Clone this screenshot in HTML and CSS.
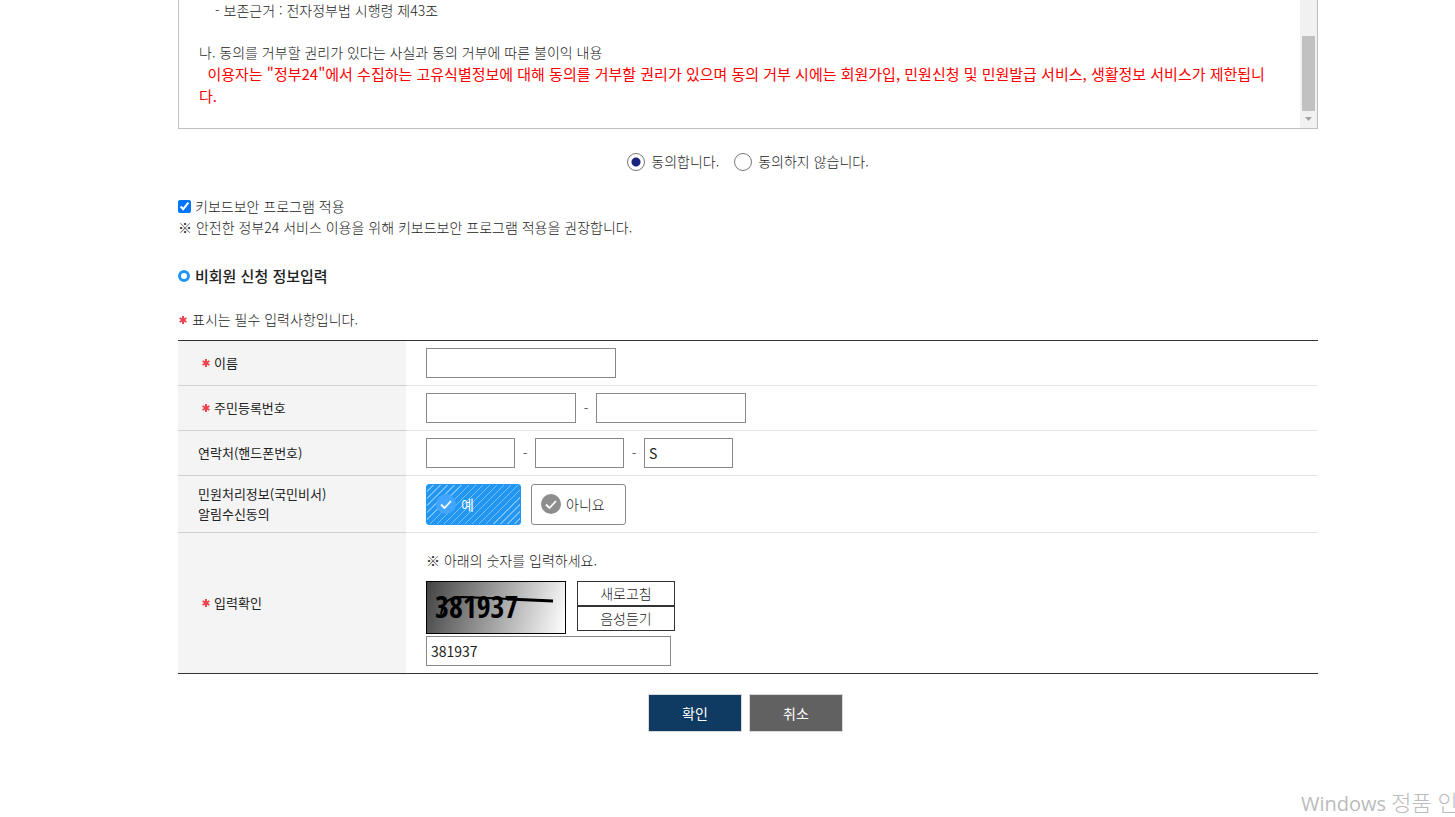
FILE: index.html
```html
<!DOCTYPE html>
<html lang="ko">
<head>
    <meta charset="UTF-8">
    <meta name="viewport" content="width=device-width, initial-scale=1.0">
    <title>비회원 신청</title>
    <link rel="stylesheet" href="styles.css">
</head>
<body>
    <svg class="defs" aria-hidden="true">
        <symbol id="star" viewBox="0 0 8 8">
            <path d="M4 0v8M.6 2l6.8 4M7.4 2L.6 6" stroke="#ee434c" stroke-width="2"/>
        </symbol>
        <symbol id="check" viewBox="0 0 20 20">
            <circle cx="10" cy="10" r="10" fill="currentColor"/>
            <path d="M5 10.500l3.500 3.500 6.500-7" fill="none" stroke="#fff" stroke-width="1.800"/>
        </symbol>
    </svg>

    <main class="container">
        <div class="terms">
            <div class="terms-text">
                <p class="indent">- 보존근거 : 전자정부법 시행령 제43조</p>
                <br>
                <p>나. 동의를 거부할 권리가 있다는 사실과 동의 거부에 따른 불이익 내용</p>
                <p class="warning">&nbsp; 이용자는 "정부24"에서 수집하는 고유식별정보에 대해 동의를 거부할 권리가 있으며 동의 거부 시에는 회원가입, 민원신청 및 민원발급 서비스, 생활정보 서비스가 제한됩니다.</p>
            </div>
            <div class="scrollbar" aria-hidden="true">
                <div class="thumb"></div>
                <svg class="arrow" viewBox="0 0 7 4"><path d="M0 0h7L3.500 4z" fill="#a3a3a3"/></svg>
            </div>
        </div>

        <div class="agree">
            <label><input type="radio" name="agree" checked>동의합니다.</label>
            <label><input type="radio" name="agree">동의하지 않습니다.</label>
        </div>

        <div class="security">
            <label><input type="checkbox" checked>키보드보안 프로그램 적용</label>
            <p>※ 안전한 정부24 서비스 이용을 위해 키보드보안 프로그램 적용을 권장합니다.</p>
        </div>

        <h2>비회원 신청 정보입력</h2>
        <p class="required"><svg class="star"><use href="#star"/></svg>표시는 필수 입력사항입니다.</p>

        <form>
            <table class="form-table">
                <tr>
                    <th scope="row"><label class="must" for="name"><svg class="star"><use href="#star"/></svg>이름</label></th>
                    <td><input class="text w-name" type="text" id="name"></td>
                </tr>
                <tr>
                    <th scope="row"><label class="must" for="jumin"><svg class="star"><use href="#star"/></svg>주민등록번호</label></th>
                    <td>
                        <div class="fields">
                            <input class="text w-jumin" type="text" id="jumin">
                            <span>-</span>
                            <input class="text w-jumin" type="password" aria-label="주민등록번호 뒷자리">
                        </div>
                    </td>
                </tr>
                <tr>
                    <th scope="row"><label for="phone">연락처(핸드폰번호)</label></th>
                    <td>
                        <div class="fields">
                            <input class="text w-phone" type="text" id="phone">
                            <span>-</span>
                            <input class="text w-phone" type="text" aria-label="핸드폰번호 가운데자리">
                            <span>-</span>
                            <input class="text w-phone" type="text" value="S" aria-label="핸드폰번호 끝자리">
                        </div>
                    </td>
                </tr>
                <tr class="tall">
                    <th scope="row">민원처리정보(국민비서)<br>알림수신동의</th>
                    <td>
                        <div class="choices">
                            <button type="button" class="choice on"><svg><use href="#check"/></svg>예</button>
                            <button type="button" class="choice"><svg><use href="#check"/></svg>아니요</button>
                        </div>
                    </td>
                </tr>
                <tr class="confirm">
                    <th scope="row"><label class="must" for="captcha"><svg class="star"><use href="#star"/></svg>입력확인</label></th>
                    <td>
                        <p>※ 아래의 숫자를 입력하세요.</p>
                        <div class="captcha">
                            <svg class="captcha-image" viewBox="0 0 138 51">
                                <text x="8" y="36">381937</text>
                                <path d="M14 32C16 20 22 15 36 15L85 17" fill="none" stroke="#000" stroke-width="2"/>
                                <path d="M80 17L126 19" stroke="#000" stroke-width="3"/>
                            </svg>
                            <div class="captcha-buttons">
                                <button type="button">새로고침</button>
                                <button type="button">음성듣기</button>
                            </div>
                        </div>
                        <input class="text w-captcha" type="text" id="captcha" value="381937">
                    </td>
                </tr>
            </table>

            <div class="buttons">
                <button type="submit" class="ok">확인</button>
                <button type="button" class="cancel">취소</button>
            </div>
        </form>
    </main>

    <div class="watermark">Windows <span>정품 인</span></div>
</body>
</html>
```
FILE: styles.css
```css
* {
    box-sizing: border-box;
}

body {
    margin: 0;
    padding-left: 41px;
    background-color: #fff;
    color: #222;
    font-family: "Noto Sans CJK KR", sans-serif;
    font-size: 14px;
    font-weight: 300;
    line-height: 21px;
    overflow: hidden;
}

p {
    margin: 0;
}

button,
input {
    font-family: inherit;
    color: inherit;
}

.defs {
    position: absolute;
    width: 0;
    height: 0;
}

.container {
    max-width: 1140px;
    margin: 0 auto;
}

/* 약관 */
.terms {
    display: flex;
    border: 1px solid #bfbfbf;
    border-top: 0;
}

.terms-text {
    flex: 1;
    padding: 0 20px 21px;
}

.indent {
    padding-left: 16px;
}

.warning {
    color: #f00;
    font-size: 15px;
    font-weight: 400;
    line-height: 22px;
    word-break: break-all;
}

.scrollbar {
    display: flex;
    flex-direction: column;
    justify-content: flex-end;
    align-items: center;
    width: 17px;
    background-color: #f1f1f1;
}

.thumb {
    width: 13px;
    height: 75px;
    background-color: #c1c1c1;
}

.arrow {
    width: 7px;
    height: 4px;
    margin: 6px 0 7px;
}

/* 동의 */
.agree {
    display: flex;
    justify-content: center;
    gap: 15px;
    margin-top: 22px;
}

.agree label {
    display: flex;
    align-items: center;
    gap: 6px;
}

.agree input {
    appearance: none;
    width: 18px;
    height: 18px;
    margin: 0;
    border: 1px solid #777;
    border-radius: 50%;
}

.agree input:checked {
    background: radial-gradient(circle, #1a237e 4px, #fff 5px);
}

.security {
    margin-top: 24px;
}

.security label {
    display: flex;
    align-items: center;
    gap: 4px;
}

.security input {
    width: 13px;
    height: 13px;
    margin: 0;
}

h2 {
    display: flex;
    align-items: center;
    gap: 5px;
    margin: 27px 0 23px;
    font-size: 15px;
    font-weight: 500;
    line-height: 21px;
}

h2::before {
    content: "";
    width: 6px;
    height: 6px;
    border: 3px solid #2196f3;
    border-radius: 50%;
}

.star {
    flex: none;
    width: 8px;
    height: 8px;
}

.required {
    display: flex;
    align-items: center;
    gap: 5px;
    padding-left: 1px;
    margin-bottom: 10px;
}

/* 입력 표 */
.form-table {
    width: 100%;
    border-collapse: collapse;
    border-top: 1px solid #333;
    border-bottom: 1px solid #333;
}

.form-table tr {
    height: 45px;
}

.form-table .tall {
    height: 57px;
}

.form-table .confirm {
    height: 141px;
}

.form-table th {
    width: 20%;
    padding: 0 20px;
    border-bottom: 1px solid #d0d0d0;
    background-color: #f4f4f4;
    font-size: 13px;
    font-weight: 400;
    line-height: 20px;
    text-align: left;
}

.form-table td {
    padding: 7px 20px;
    border-bottom: 1px solid #e5e5e5;
}

.form-table .confirm td {
    vertical-align: bottom;
}

.form-table tr:last-child > * {
    border-bottom: 1px solid #333;
}

.must {
    display: flex;
    align-items: center;
    gap: 4px;
    padding-left: 4px;
}

.text {
    display: block;
    height: 30px;
    padding: 0 4px;
    border: 1px solid #888;
    background-color: #fff;
    font-size: 14px;
    font-weight: 400;
}

.w-name {
    width: 190px;
}

.w-jumin {
    width: 150px;
}

.w-phone {
    width: 89px;
}

.w-captcha {
    width: 245px;
}

.fields {
    display: flex;
    align-items: center;
}

.fields span {
    width: 20px;
    text-align: center;
}

.choices {
    display: flex;
    gap: 10px;
}

.choice {
    display: flex;
    align-items: center;
    gap: 5px;
    width: 95px;
    height: 41px;
    padding: 0 9px;
    border: 1px solid #888;
    border-radius: 3px;
    background-color: #fff;
    font-size: 14px;
    font-weight: 300;
}

.choice svg {
    width: 20px;
    height: 20px;
    color: #8e8e8e;
}

.choice.on {
    border-color: #2196f3;
    background: repeating-linear-gradient(135deg, #2196f3 0 4px, #79bff8 4px 5px);
    color: #fff;
    font-weight: 400;
}

.choice.on svg {
    color: #42a5ff;
}

.captcha {
    display: flex;
    gap: 11px;
    margin: 10px 0 2px;
}

.captcha-image {
    width: 140px;
    height: 53px;
    border: 1px solid #000;
    background: linear-gradient(105deg, #444, #fff);
    font-family: "Liberation Sans Narrow", "Open Sans Condensed", "DejaVu Sans Condensed", sans-serif;
    font-size: 30px;
    font-weight: 700;
}

.captcha-buttons {
    display: flex;
    flex-direction: column;
}

.captcha-buttons button {
    width: 98px;
    height: 25px;
    padding: 0;
    border: 1px solid #333;
    background-color: #fff;
    font-size: 14px;
    font-weight: 300;
    line-height: 21px;
}

.buttons {
    display: flex;
    justify-content: center;
    gap: 7px;
    margin-top: 20px;
    padding-right: 5px;
}

.buttons button {
    width: 94px;
    height: 38px;
    border: 1px solid #d9d9d9;
    color: #fff;
    font-size: 14px;
    font-weight: 400;
}

.ok {
    background-color: #0f3b63;
}

.cancel {
    background-color: #616161;
}

/* 화면 위에 겹치는 안내 문구 */
.watermark {
    position: absolute;
    left: 1301px;
    top: 788px;
    color: #bbb;
    font-family: "Open Sans", "Noto Sans CJK KR", sans-serif;
    font-size: 20px;
    font-weight: 400;
    line-height: 28px;
    white-space: nowrap;
}

.watermark span {
    font-size: 22px;
    font-weight: 300;
}
```
